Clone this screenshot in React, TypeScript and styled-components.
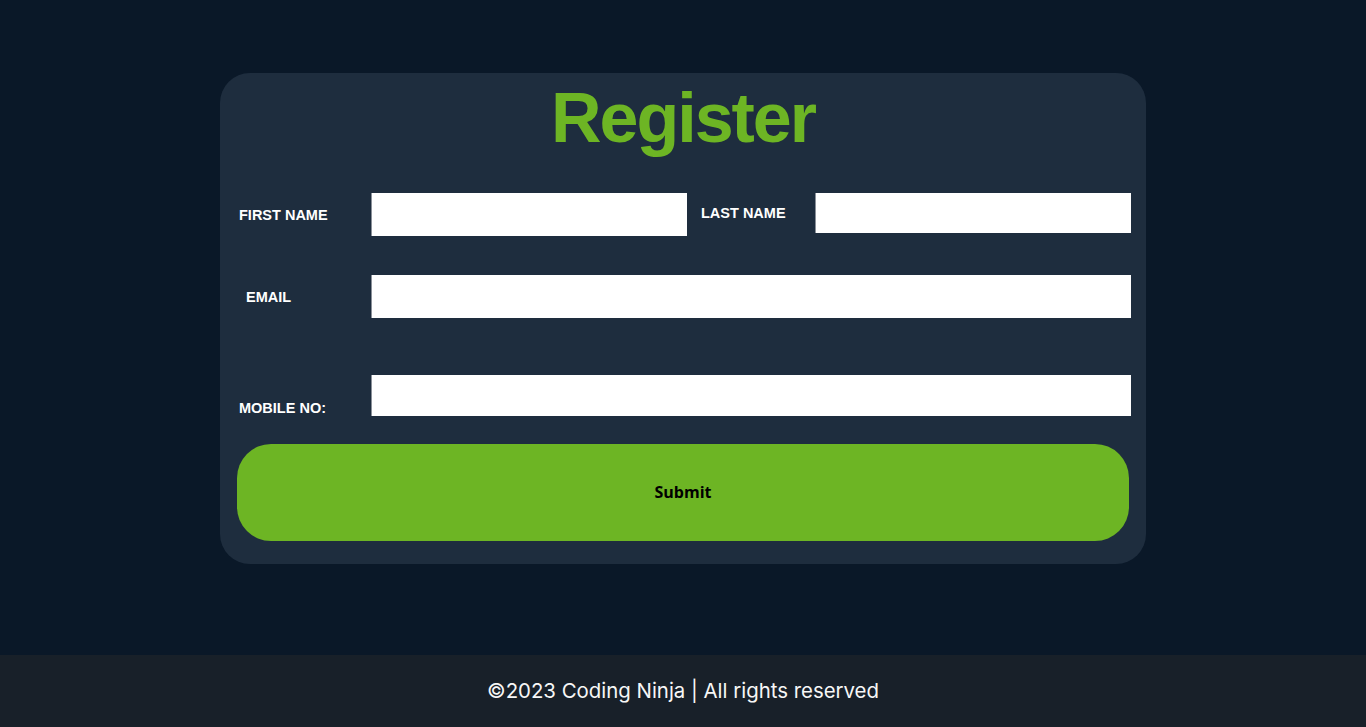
import React from "react";
import styled, { createGlobalStyle } from "styled-components";

const Global = createGlobalStyle`
  html, body { margin: 0; padding: 0; }
  body { background: #0a1828; font-family: "Liberation Sans", Arial, sans-serif; }
  * { box-sizing: border-box; }
`;

const Page = styled.div`
  display: flex;
  flex-direction: column;
  min-height: 727px;
`;

const Main = styled.main`
  height: 655px;
  display: flex;
  justify-content: center;
  align-items: flex-start;
  padding-top: 73px;
`;

const Card = styled.form`
  width: 926px;
  background: #1e2d3e;
  border-radius: 30px;
  padding: 10px 17px 23px 17px;
  display: flex;
  flex-direction: column;
`;

const Title = styled.h1`
  margin: 0;
  text-align: center;
  color: #6db524;
  font-family: "Liberation Sans", Arial, sans-serif;
  font-weight: 700;
  font-size: 70px;
  letter-spacing: -2px;
  line-height: 70px;
  height: 70px;
`;

const Row = styled.div<{ $top: number; $align?: string }>`
  display: flex;
  align-items: ${(p) => p.$align || "center"};
  margin-top: ${(p) => p.$top}px;
`;

const Group = styled.div`
  display: flex;
  align-items: center;
`;

const Label = styled.label<{ $indent?: number; $width: number; $gap?: number }>`
  color: #ffffff;
  font-family: "Liberation Sans", Arial, sans-serif;
  font-weight: 700;
  font-size: 14.5px;
  margin-left: ${(p) => (p.$gap || 0) + (p.$indent || 0)}px;
  width: ${(p) => p.$width}px;
  flex-shrink: 0;
  white-space: nowrap;
`;

const Input = styled.input<{ $w: number; $h: number }>`
  width: ${(p) => p.$w}px;
  height: ${(p) => p.$h}px;
  background: #ffffff;
  border: none;
  border-left: 1px solid #8a9099;
  outline: none;
  padding: 0 6px;
  font-size: 14px;
  flex-shrink: 0;
`;

const Submit = styled.button`
  margin-top: 28px;
  width: 892px;
  height: 97px;
  border: none;
  border-radius: 34px;
  background: #6db524;
  color: #000000;
  font-family: "Open Sans", "Noto Sans", sans-serif;
  font-weight: 700;
  font-size: 16px;
  padding-bottom: 2px;
  cursor: pointer;
`;

const Footer = styled.footer`
  height: 72px;
  background: #182029;
  display: flex;
  align-items: center;
  justify-content: center;
  color: #f7f7f7;
  font-family: Inter, "Open Sans", sans-serif;
  font-size: 20.4px;
  padding-bottom: 2px;
`;

export default function App() {
  return (
    <Page>
      <Global />
      <Main>
        <Card onSubmit={(e) => e.preventDefault()}>
          <Title>Register</Title>
          <Row $top={40} $align="flex-start">
            <Group>
              <Label $indent={2} $width={132}>FIRST NAME</Label>
              <Input $w={316} $h={43} />
            </Group>
            <Group>
              <Label $gap={14} $width={114}>LAST NAME</Label>
              <Input $w={316} $h={40} />
            </Group>
          </Row>
          <Row $top={39}>
            <Label $indent={9} $width={125}>EMAIL</Label>
            <Input $w={760} $h={43} />
          </Row>
          <Row $top={57} $align="flex-end">
            <Label $indent={2} $width={132}>MOBILE NO:</Label>
            <Input $w={760} $h={41} />
          </Row>
          <Submit type="submit">Submit</Submit>
        </Card>
      </Main>
      <Footer>©2023 Coding Ninja | All rights reserved</Footer>
    </Page>
  );
}
